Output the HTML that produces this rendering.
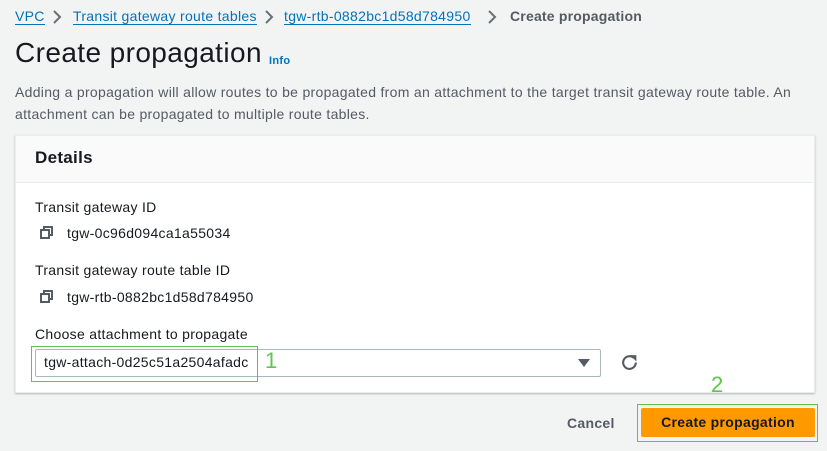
<!DOCTYPE html>
<html><head><style>
*{margin:0;padding:0;box-sizing:border-box}
body{width:827px;height:451px;background:#f2f3f3;font-family:"Liberation Sans",sans-serif;color:#16191f;position:relative;overflow:hidden;font-size:14px;letter-spacing:0.3px}
.a{position:absolute;white-space:nowrap}
.lnk{color:#0073bb;border-bottom:1px solid #0073bb;line-height:17px}
.cp{position:absolute;width:13px;height:13px}
</style></head><body>
<div class="a" style="left:15px;top:8px;font-size:14px"><span class="lnk">VPC</span></div>
<svg class="a" style="left:52px;top:10px" width="10" height="14"><path d="M2 1l6 6-6 6" stroke="#687078" stroke-width="2" fill="none"/></svg>
<div class="a" style="left:73px;top:8px"><span class="lnk">Transit gateway route tables</span></div>
<svg class="a" style="left:264px;top:10px" width="10" height="14"><path d="M2 1l6 6-6 6" stroke="#687078" stroke-width="2" fill="none"/></svg>
<div class="a" style="left:284px;top:8px"><span class="lnk">tgw-rtb-0882bc1d58d784950</span></div>
<svg class="a" style="left:487px;top:10px" width="10" height="14"><path d="M2 1l6 6-6 6" stroke="#687078" stroke-width="2" fill="none"/></svg>
<div class="a" style="left:510px;top:8px;color:#545b64;font-weight:bold;letter-spacing:0.2px">Create propagation</div>
<div class="a" style="left:15px;top:37px;font-size:28px;color:#16191f;letter-spacing:0.4px">Create propagation</div>
<div class="a" style="left:269px;top:55px;font-size:11px;font-weight:bold;color:#0073bb">Info</div>
<div class="a" style="left:15px;top:81px;color:#545b64;line-height:22px;font-size:14px;white-space:normal;width:800px">Adding a propagation will allow routes to be propagated from an attachment to the target transit gateway route table. An attachment can be propagated to multiple route tables.</div>
<div class="a" style="left:15px;top:135px;width:800px;height:258px;background:#fff;border:1px solid #eaeded;box-shadow:0 1px 2px rgba(0,0,0,.25)">
 <div style="height:47px;background:#fafafa;border-bottom:1px solid #eaeded"></div>
</div>
<div class="a" style="left:35px;top:148px;font-size:17px;font-weight:bold">Details</div>
<div class="a" style="left:35px;top:199px">Transit gateway ID</div>
<svg class="cp" style="left:40px;top:226px" viewBox="0 0 13 13"><rect x="1" y="4" width="8" height="8" fill="none" stroke="#545b64" stroke-width="2"/><path d="M4 4V1h8v8H9" fill="none" stroke="#545b64" stroke-width="2"/></svg>
<div class="a" style="left:67px;top:225px">tgw-0c96d094ca1a55034</div>
<div class="a" style="left:35px;top:262px">Transit gateway route table ID</div>
<svg class="cp" style="left:40px;top:290px" viewBox="0 0 13 13"><rect x="1" y="4" width="8" height="8" fill="none" stroke="#545b64" stroke-width="2"/><path d="M4 4V1h8v8H9" fill="none" stroke="#545b64" stroke-width="2"/></svg>
<div class="a" style="left:67px;top:289px">tgw-rtb-0882bc1d58d784950</div>
<div class="a" style="left:35px;top:326px">Choose attachment to propagate</div>
<div class="a" style="left:35px;top:349px;width:566px;height:28px;border:1px solid #aab7b8;border-radius:2px;background:#fff"></div>
<div class="a" style="left:44px;top:354px">tgw-attach-0d25c51a2504afadc</div>
<svg class="a" style="left:578px;top:358px" width="12" height="10"><path d="M0 1h12L6 9z" fill="#545b64"/></svg>
<svg class="a" style="left:620px;top:353px" width="19" height="19" viewBox="0 0 18 18"><path d="M15 9a6 6 0 1 1-2.2-4.6" fill="none" stroke="#545b64" stroke-width="2"/><path d="M9.5 2h6v6z" fill="#545b64"/></svg>
<div class="a" style="left:31px;top:346px;width:227px;height:36px;border:1px solid #5ec54a"></div>
<div class="a" style="left:265px;top:348px;font-size:22px;color:#5ec54a">1</div>
<div class="a" style="left:711px;top:372px;font-size:22px;color:#5ec54a">2</div>
<div class="a" style="left:567px;top:415px;font-weight:bold;color:#545b64">Cancel</div>
<div class="a" style="left:637px;top:404px;width:181px;height:38px;border:1px solid #5ec54a"></div>
<div class="a" style="left:641px;top:408px;width:174px;height:29px;background:#ff9900;border-radius:2px;font-weight:bold;text-align:center;line-height:29px">Create propagation</div>
</body></html>
